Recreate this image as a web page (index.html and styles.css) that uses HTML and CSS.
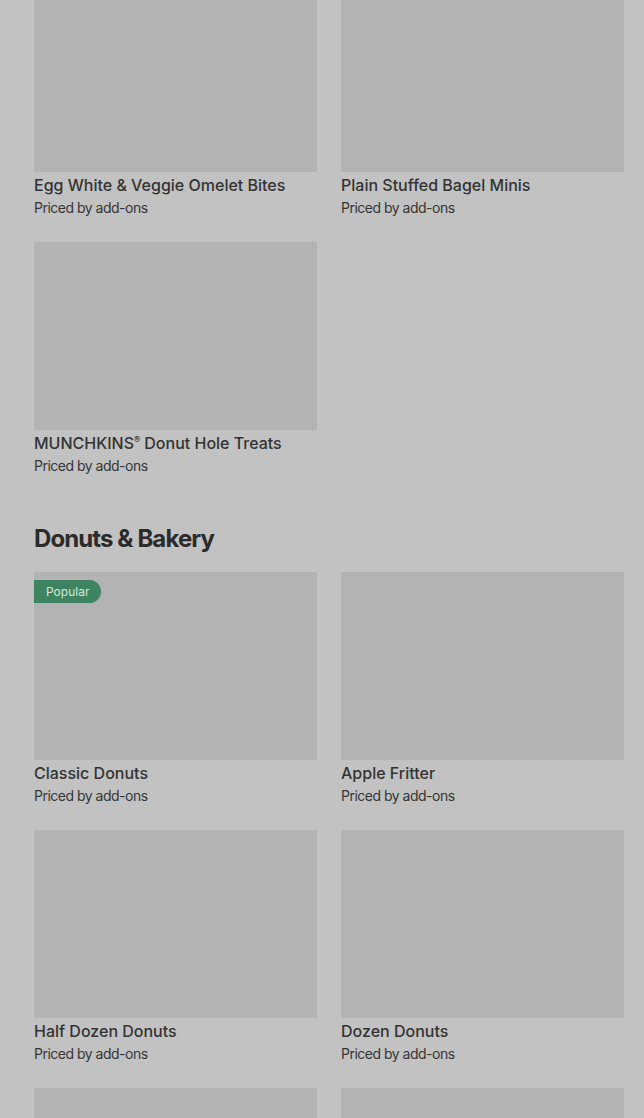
FILE: index.html
```html
<!DOCTYPE html>
<html lang="en">
<head>
<meta charset="UTF-8" />
<meta name="viewport" content="width=device-width, initial-scale=1" />
<title>Menu</title>
<link rel="stylesheet" href="styles.css">
</head>
<body>
<main class="menu">
  <section class="category">
    <div class="grid">
      <div class="item">
        <div class="thumb"></div>
        <div class="name">Egg White &amp; Veggie Omelet Bites</div>
        <div class="price">Priced by add-ons</div>
      </div>
      <div class="item">
        <div class="thumb"></div>
        <div class="name">Plain Stuffed Bagel Minis</div>
        <div class="price">Priced by add-ons</div>
      </div>
      <div class="item">
        <div class="thumb"></div>
        <div class="name">MUNCHKINS<sup>®</sup> Donut Hole Treats</div>
        <div class="price">Priced by add-ons</div>
      </div>
    </div>
  </section>

  <section class="category">
    <h2>Donuts &amp; Bakery</h2>
    <div class="grid">
      <div class="item">
        <div class="thumb"><span class="badge">Popular</span></div>
        <div class="name">Classic Donuts</div>
        <div class="price">Priced by add-ons</div>
      </div>
      <div class="item">
        <div class="thumb"></div>
        <div class="name">Apple Fritter</div>
        <div class="price">Priced by add-ons</div>
      </div>
      <div class="item">
        <div class="thumb"></div>
        <div class="name">Half Dozen Donuts</div>
        <div class="price">Priced by add-ons</div>
      </div>
      <div class="item">
        <div class="thumb"></div>
        <div class="name">Dozen Donuts</div>
        <div class="price">Priced by add-ons</div>
      </div>
      <div class="item">
        <div class="thumb"></div>
      </div>
      <div class="item">
        <div class="thumb"></div>
      </div>
    </div>
  </section>
</main>
</body>
</html>
```

FILE: styles.css
```css
html, body {
  margin: 0;
  padding: 0;
  background: #c2c2c2;
  font-family: Inter, "Noto Sans", sans-serif;
  color: #2e2e2e;
  overflow: hidden;
  height: 1118px;
}
.menu {
  padding: 0 20px 0 34px;
  margin-top: -16px;
}
.category + .category {
  margin-top: 48px;
}
.category h2 {
  margin: 0 0 18px;
  font-size: 24px;
  line-height: 30px;
  font-weight: 700;
  letter-spacing: -0.9px;
  color: #2b2b2b;
}
.grid {
  display: grid;
  grid-template-columns: 283px 283px;
  column-gap: 24px;
  row-gap: 24px;
}
.thumb {
  position: relative;
  height: 188px;
  background: #b3b3b3;
  margin-bottom: 3px;
}
.badge {
  position: absolute;
  top: 8px;
  left: 0;
  height: 23px;
  line-height: 23px;
  padding: 0 12px;
  font-size: 12px;
  color: #d6e6dc;
  background: #3f8461;
  border-radius: 0 12px 12px 0;
}
.name {
  font-size: 16px;
  line-height: 20px;
  font-weight: 500;
  letter-spacing: 0;
  color: #333;
}
.name sup {
  font-size: 9px;
  vertical-align: 6px;
  line-height: 0;
}
.price {
  margin-top: 3px;
  font-size: 14px;
  line-height: 20px;
  letter-spacing: -0.5px;
  color: #363636;
}
```
